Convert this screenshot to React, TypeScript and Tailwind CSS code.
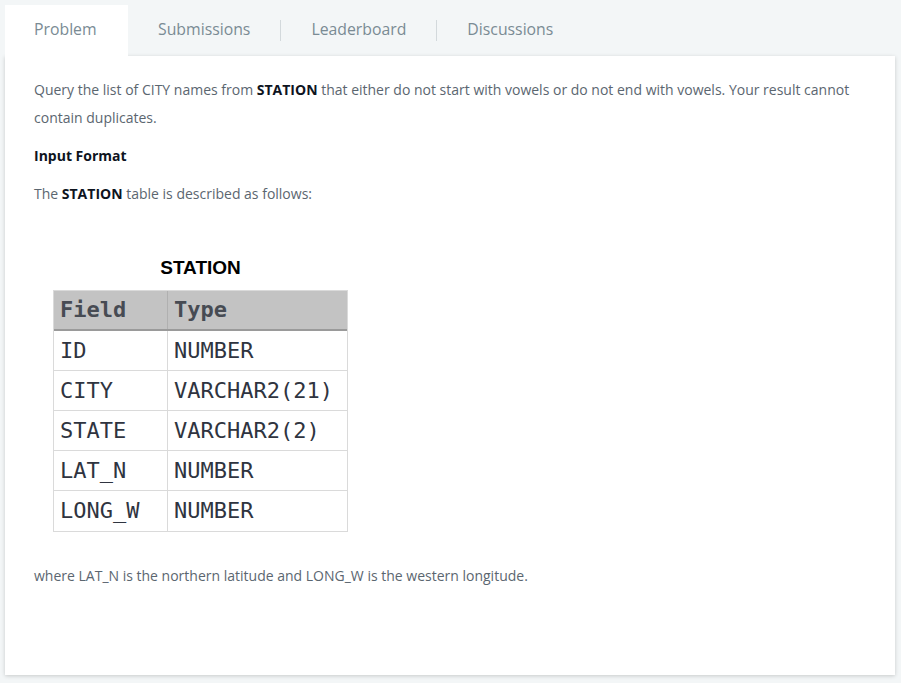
import React from "react";

const rows: [string, string][] = [
  ["ID", "NUMBER"],
  ["CITY", "VARCHAR2(21)"],
  ["STATE", "VARCHAR2(2)"],
  ["LAT_N", "NUMBER"],
  ["LONG_W", "NUMBER"],
];

export default function App() {
  return (
    <div
      className="w-[901px] h-[683px] bg-[#f3f6f7] pl-[5px] pr-[6px] pt-[5px] overflow-hidden"
      style={{ fontFamily: '"Open Sans", sans-serif' }}
    >
      <div className="flex items-center h-[51px] text-[15.8px] text-[#7a8b94] pb-[1px]">
        <div className="h-[51px] mb-[-1px] pb-[1px] flex items-center px-[29px] bg-white w-[123px]">Problem</div>
        <div className="px-[30px]">Submissions</div>
        <div className="w-px h-[21px] bg-[#d3d9dc]" />
        <div className="px-[30px]">Leaderboard</div>
        <div className="w-px h-[21px] bg-[#d3d9dc]" />
        <div className="px-[30px]">Discussions</div>
      </div>
      <div className="bg-white h-[619px] shadow-[0_1px_4px_rgba(0,0,0,0.18)] pl-[29px] pr-[30px] pt-[20px] text-[14px] leading-[28px] text-[#5b6670]">
        <p className="mb-[10px]">
          Query the list of CITY names from <b className="text-[#0e141e] font-bold">STATION</b> that either do not
          start with vowels or do not end with vowels. Your result cannot contain duplicates.
        </p>
        <p className="mb-[10px] font-bold text-[#0e141e]">Input Format</p>
        <p>
          The <b className="text-[#0e141e] font-bold">STATION</b> table is described as follows:
        </p>
        <div className="mt-[49px] ml-[19px] w-[295px]">
          <div
            className="text-center text-[19px] leading-[22px] font-bold text-black mb-[11px]"
            style={{ fontFamily: '"Liberation Sans", Arial, sans-serif' }}
          >
            STATION
          </div>
          <div
            className="border border-[#dadada] text-[22px] text-[#2f3440]"
            style={{ fontFamily: '"DejaVu Sans Mono", monospace' }}
          >
            <div className="flex h-[40px] bg-[#c3c3c3] border-b-2 border-[#9a9a9a] font-bold text-[#474b53]">
              <div className="w-[114px] border-r border-[#b0b0b0] pl-[6px] flex items-center">Field</div>
              <div className="flex-1 pl-[6px] flex items-center">Type</div>
            </div>
            {rows.map(([a, b], i) => (
              <div
                key={a}
                className={`flex h-[40px] ${i < rows.length - 1 ? "border-b border-[#dadada]" : ""}`}
              >
                <div className="w-[114px] border-r border-[#dadada] pl-[6px] flex items-center">{a}</div>
                <div className="flex-1 pl-[6px] flex items-center">{b}</div>
              </div>
            ))}
          </div>
        </div>
        <p className="mt-[30px]">where LAT_N is the northern latitude and LONG_W is the western longitude.</p>
      </div>
    </div>
  );
}
